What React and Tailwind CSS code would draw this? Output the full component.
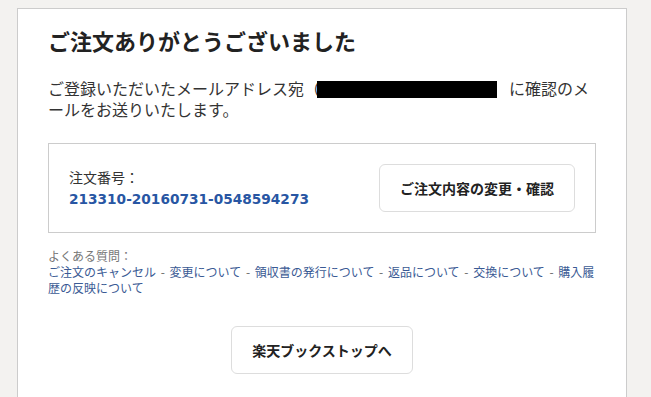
const faqLinks = [
  'ご注文のキャンセル',
  '変更について',
  '領収書の発行について',
  '返品について',
  '交換について',
  '購入履歴の反映について',
];

const App = () => {
  return (
    <div
      className="min-h-screen bg-[#f3f2f0] pt-[8px] pl-[17px] pr-[24px]"
      style={{ fontFamily: '"Noto Sans CJK JP", "Noto Sans", sans-serif' }}
    >
      <div className="w-[610px] min-h-[400px] bg-white border border-[#cccccc] px-[30px] pt-[15px] pb-8">
        {/* Heading */}
        <h1 className="text-[22px] leading-[32px] font-bold text-[#222222]">
          ご注文ありがとうございました
        </h1>

        {/* Message */}
        <p className="mt-[22px] text-[16px] leading-[21px] text-[#333333]">
          ご登録いただいたメールアドレス宛（
          <span className="inline-block align-[-3px] w-[180px] h-[17px] bg-black ml-[-3px] mr-[12px]"></span>
          に確認のメールをお送りいたします。
        </p>

        {/* Order box */}
        <div className="mt-[23px] border border-[#cccccc] px-[20px] py-[20px] flex items-center justify-between">
          <div>
            <p className="text-[14px] leading-[22px] text-[#333333]">注文番号：</p>
            <p
              className="text-[13.7px] leading-[22px] font-bold text-[#2856a3]"
              style={{ fontFamily: '"DejaVu Sans", sans-serif' }}
            >
              213310-20160731-0548594273
            </p>
          </div>
          <button className="h-[48px] px-[20px] rounded-[6px] border border-[#dddddd] bg-white text-[14px] font-bold text-[#222222]">
            ご注文内容の変更・確認
          </button>
        </div>

        {/* FAQ */}
        <div className="mt-[15px] text-[12px] leading-[16px]">
          <p className="text-[#777777]">よくある質問：</p>
          <p className="text-[#3a5a94]">
            {faqLinks.map((label, i) => (
              <span key={label}>
                {i > 0 && <span className="text-[#666666] mx-[2px]"> - </span>}
                <a href="#" className="hover:underline">{label}</a>
              </span>
            ))}
          </p>
        </div>

        {/* Back to store */}
        <div className="mt-[30px] flex justify-center">
          <button className="h-[48px] px-[20px] rounded-[6px] border border-[#dddddd] bg-white text-[14px] font-bold text-[#222222]">
            楽天ブックストップへ
          </button>
        </div>
      </div>
    </div>
  );
};

export default App;
